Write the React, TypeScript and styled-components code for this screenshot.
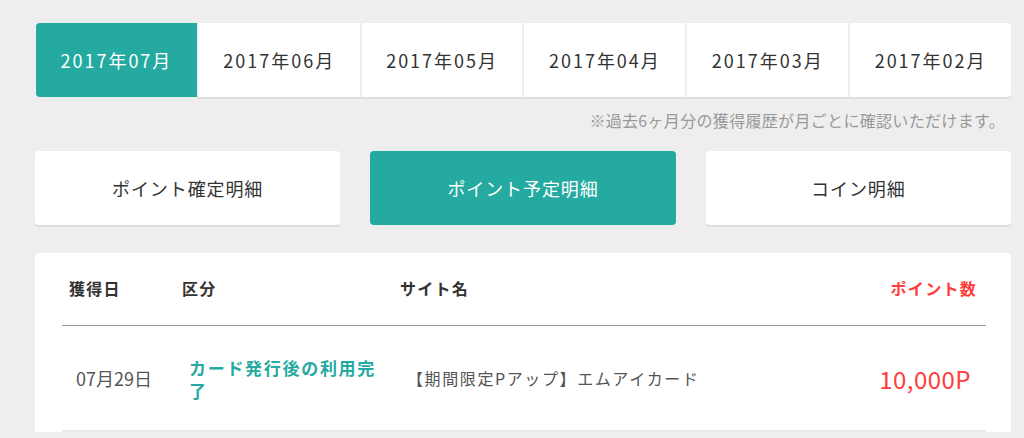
import React from "react";
import styled, { createGlobalStyle } from "styled-components";

const GlobalStyle = createGlobalStyle`
  html, body {
    margin: 0;
    padding: 0;
    background: #eeeeee;
    font-family: "Noto Sans CJK JP", "Noto Sans", sans-serif;
    color: #333;
  }
  * { box-sizing: border-box; }
`;

const TEAL = "#24aaa0";
const RED = "#ff3b3b";

const Page = styled.div`
  padding: 23px 13px 0 35px;
`;

const MonthTabs = styled.div`
  display: flex;
  margin-left: 1px;
  height: 74px;
`;

const MonthTab = styled.div<{ $active?: boolean }>`
  flex: 1;
  display: flex;
  align-items: center;
  justify-content: center;
  font-size: 18px;
  letter-spacing: 0.11em;
  background: ${(p) => (p.$active ? TEAL : "#fff")};
  color: ${(p) => (p.$active ? "#fff" : "#333")};
  box-shadow: ${(p) => (p.$active ? "none" : "0 2px 0 #dedede")};
  & + & {
    border-left: 2px solid #eee;
  }
  &:first-child {
    border-radius: 4px 0 0 4px;
  }
  &:last-child {
    border-radius: 0 4px 4px 0;
  }
`;

const Note = styled.p`
  margin: 13px 6px 0 0;
  text-align: right;
  font-size: 16px;
  line-height: 21px;
  letter-spacing: 0.02em;
  color: #999;
`;

const DetailTabs = styled.div`
  display: grid;
  grid-template-columns: repeat(3, 1fr);
  gap: 30px;
  margin-top: 20px;
`;

const DetailTab = styled.div<{ $active?: boolean }>`
  height: 74px;
  display: flex;
  align-items: center;
  justify-content: center;
  border-radius: 4px;
  font-size: 18px;
  letter-spacing: 0.05em;
  background: ${(p) => (p.$active ? TEAL : "#fff")};
  color: ${(p) => (p.$active ? "#fff" : "#333")};
  box-shadow: ${(p) => (p.$active ? "none" : "0 2px 0 #dedede")};
`;

const Panel = styled.div`
  margin-top: 28px;
  background: #fff;
  border-radius: 4px 4px 0 0;
  padding: 0 25px 0 27px;
`;

const Row = styled.div<{ $head?: boolean }>`
  display: grid;
  grid-template-columns: 113px 218px 1fr auto;
  align-items: center;
  height: ${(p) => (p.$head ? "73px" : "106px")};
  padding: ${(p) => (p.$head ? "0 9px 2px 7px" : "0 15px 0 14px")};
  border-bottom: ${(p) => (p.$head ? "1px solid #999" : "2px solid #eaeaea")};
`;

const HeadCell = styled.div<{ $red?: boolean }>`
  font-size: 16px;
  font-weight: 700;
  letter-spacing: 0.08em;
  color: ${(p) => (p.$red ? RED : "#333")};
`;

const DateCell = styled.div`
  font-size: 18px;
  color: #555;
`;

const CategoryCell = styled.div`
  font-size: 17px;
  font-weight: 700;
  letter-spacing: 0.1em;
  line-height: 23px;
  color: ${TEAL};
  padding-right: 18px;
  margin-top: 2px;
`;

const SiteCell = styled.div`
  font-size: 16px;
  letter-spacing: 0.1em;
  color: #555;
`;

const PointCell = styled.div`
  font-size: 24px;
  letter-spacing: 0.02em;
  color: ${RED};
  text-align: right;
`;

const months = ["2017年07月", "2017年06月", "2017年05月", "2017年04月", "2017年03月", "2017年02月"];
const details = ["ポイント確定明細", "ポイント予定明細", "コイン明細"];

export default function App() {
  return (
    <>
      <GlobalStyle />
      <Page>
        <MonthTabs>
          {months.map((m, i) => (
            <MonthTab key={m} $active={i === 0}>
              {m}
            </MonthTab>
          ))}
        </MonthTabs>
        <Note>※過去6ヶ月分の獲得履歴が月ごとに確認いただけます。</Note>
        <DetailTabs>
          {details.map((d, i) => (
            <DetailTab key={d} $active={i === 1}>
              {d}
            </DetailTab>
          ))}
        </DetailTabs>
        <Panel>
          <Row $head>
            <HeadCell>獲得日</HeadCell>
            <HeadCell>区分</HeadCell>
            <HeadCell>サイト名</HeadCell>
            <HeadCell $red>ポイント数</HeadCell>
          </Row>
          <Row>
            <DateCell>07月29日</DateCell>
            <CategoryCell>カード発行後の利用完了</CategoryCell>
            <SiteCell>【期間限定Pアップ】エムアイカード</SiteCell>
            <PointCell>10,000P</PointCell>
          </Row>
        </Panel>
      </Page>
    </>
  );
}
